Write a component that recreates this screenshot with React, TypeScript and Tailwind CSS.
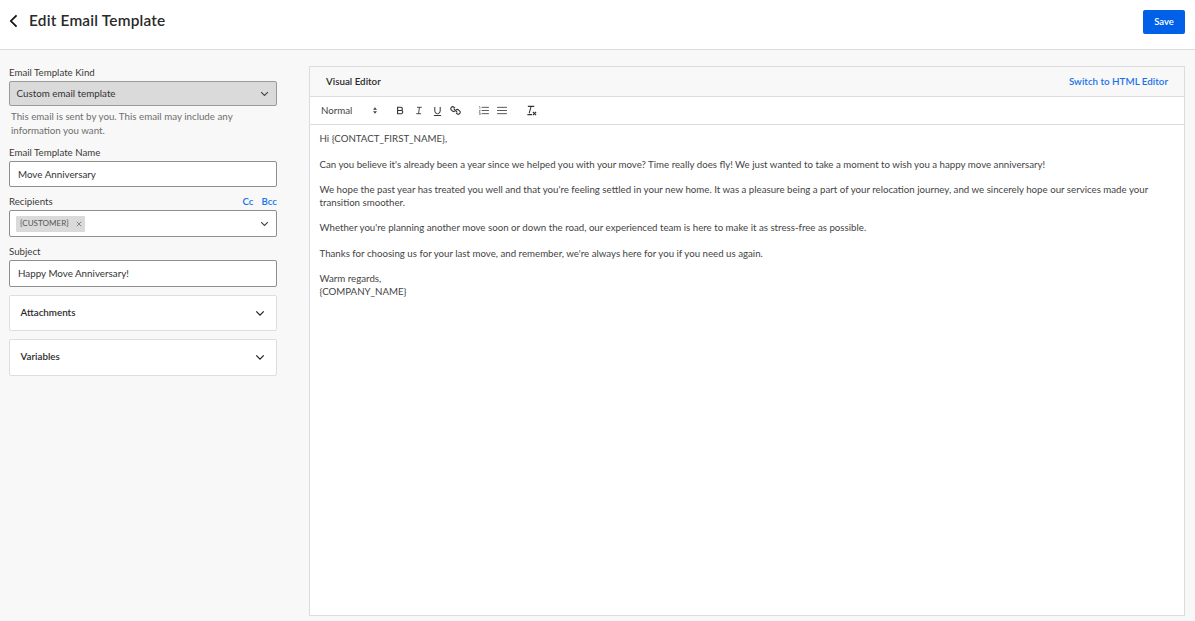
import React from 'react';

const Chevron = ({ className }: { className: string }) => (
  <svg viewBox="0 0 12 8" fill="none" stroke="currentColor" className={className}>
    <path d="M1.5 1.5 6 6l4.500-4.500" strokeWidth="1.500" />
  </svg>
);

const Field = ({ label, children }: { label: React.ReactNode; children: React.ReactNode }) => (
  <div>
    <div className="h-[14px] flex items-center justify-between text-[9.7px] leading-[14px] text-[#3a3a3a]">{label}</div>
    {children}
  </div>
);

const Accordion = ({ title, h }: { title: string; h: string }) => (
  <div className={`flex justify-between pl-[10.500px] pr-[11px] pt-[9px] bg-white border border-[#dedede] rounded-[2px] ${h}`}>
    <span className="text-[9.800px] font-semibold leading-[14px] text-[#2b2b2b]">{title}</span>
    <Chevron className="w-[10px] h-[7px] mt-[5px] text-[#222]" />
  </div>
);

const ToolButton = ({ children }: { children: React.ReactNode }) => (
  <span className="w-[18.500px] h-[14px] flex items-center justify-center">{children}</span>
);

const paragraphs = [
  "Can you believe it's already been a year since we helped you with your move? Time really does fly! We just wanted to take a moment to wish you a happy move anniversary!",
  "We hope the past year has treated you well and that you're feeling settled in your new home. It was a pleasure being a part of your relocation journey, and we sincerely hope our services made your transition smoother.",
  "Whether you're planning another move soon or down the road, our experienced team is here to make it as stress-free as possible.",
  "Thanks for choosing us for your last move, and remember, we're always here for you if you need us again.",
];

export default function App() {
  return (
    <div className="w-[1195px] h-[621px] overflow-hidden bg-[#f8f8f8] font-['Lato',sans-serif]">
      {/* Header */}
      <header className="h-[50px] bg-white border-b border-[#dcdcdc] flex items-start justify-between pl-[9px] pr-[10px]">
        <div className="flex items-center h-[42px]">
          <svg viewBox="0 0 10 16" fill="none" stroke="#111" className="w-[9px] h-[14px]">
            <path d="M8.500 1.500 2 8l6.500 6.500" strokeWidth="2" />
          </svg>
          <h1 className="ml-[11px] text-[15.400px] font-semibold tracking-[0.2px] text-[#2a2a2a]">Edit Email Template</h1>
        </div>
        <button className="mt-[10px] w-[42px] h-[24px] rounded-[2px] bg-[#0061e8] text-white text-[9.500px] font-semibold">Save</button>
      </header>

      <div className="flex pl-[9px] pt-[15px]">
        {/* Left column */}
        <aside className="w-[268px] shrink-0 flex flex-col">
          <Field label="Email Template Kind">
            <div className="h-[25px] mt-[2px] flex items-center justify-between pl-[6.500px] pr-[7px] bg-[#dadada] border border-[#9a9a9a] rounded-[2px] text-[9.800px] text-[#333]">
              Custom email template
              <Chevron className="w-[9px] h-[6px] text-[#444]" />
            </div>
          </Field>
          <p className="mt-[4px] pl-[2px] text-[9.750px] leading-[13.500px] text-[#6e6e6e]">
            This email is sent by you. This email may include any information you want.
          </p>
          <div className="mt-[8px]">
            <Field label="Email Template Name">
              <div className="h-[26px] mt-[2px] flex items-center px-2 bg-white border border-[#8f8f8f] rounded-[2px] text-[9.800px] text-[#333]">
                Move Anniversary
              </div>
            </Field>
          </div>
          <div className="mt-[7px]">
            <Field
              label={
                <>
                  <span>Recipients</span>
                  <span className="flex gap-2 font-semibold text-[#1a73e8]">
                    <span>Cc</span>
                    <span>Bcc</span>
                  </span>
                </>
              }
            >
              <div className="h-[27px] mt-[2px] flex items-center justify-between pl-[6px] pr-[7px] bg-white border border-[#8f8f8f] rounded-[2px]">
                <span className="h-[16px] w-[69px] flex items-center justify-between pl-1 pr-[3px] bg-[#dadada] rounded-[1px] text-[8.100px] text-[#555]">
                  {'{CUSTOMER}'}
                  <svg viewBox="0 0 8 8" stroke="#666" className="w-[6px] h-[6px]">
                    <path d="m1 1 6 6M7 1 1 7" strokeWidth="1" />
                  </svg>
                </span>
                <Chevron className="w-[9px] h-[6px] text-[#444]" />
              </div>
            </Field>
          </div>
          <div className="mt-[7px]">
            <Field label="Subject">
              <div className="h-[27px] mt-[2px] flex items-center px-2 bg-white border border-[#8f8f8f] rounded-[2px] text-[9.800px] text-[#333]">
                Happy Move Anniversary!
              </div>
            </Field>
          </div>
          <div className="mt-[8px] flex flex-col gap-[8px]">
            <Accordion title="Attachments" h="h-[36px]" />
            <Accordion title="Variables" h="h-[37px]" />
          </div>
        </aside>

        {/* Editor */}
        <section className="ml-[32px] w-[876px] h-[550px] mt-[1px] flex flex-col bg-white border border-[#dcdcdc]">
          <div className="h-[30px] flex items-center justify-between pl-[16px] pr-[16px] pb-[1px] bg-[#f8f8f8] border-b border-[#dcdcdc]">
            <span className="text-[9.800px] font-semibold text-[#2b2b2b]">Visual Editor</span>
            <span className="text-[9.800px] font-semibold text-[#1a73e8]">Switch to HTML Editor</span>
          </div>
          <div className="h-[28px] flex items-center pl-[11px] border-b border-[#dcdcdc] text-[#444]">
            <span className="w-[70px] text-[9.700px] text-[#444] flex items-center">
              Normal
              <svg viewBox="0 0 6 10" fill="#444" className="ml-[21px] w-[4px] h-[7px]">
                <path d="M3 0 6 4H0zM3 10 0 6h6z" />
              </svg>
            </span>
            <div className="flex items-center">
              <ToolButton>
                <svg viewBox="0 0 10 10" fill="none" stroke="#333" className="w-[8px] h-[9px]">
                  <path d="M2 1h4a2 2 0 0 1 0 4H2zM2 5h4.500a2 2 0 0 1 0 4H2z" strokeWidth="1.400" />
                </svg>
              </ToolButton>
              <ToolButton>
                <svg viewBox="0 0 10 10" fill="none" stroke="#333" className="w-[8px] h-[9px]">
                  <path d="M2.500 1h6M1.500 9h6M5.500 1l-1 8" strokeWidth="1.100" />
                </svg>
              </ToolButton>
              <ToolButton>
                <svg viewBox="0 0 10 11" fill="none" stroke="#333" className="w-[9px] h-[10px]">
                  <path d="M2 1v4.500a3 3 0 0 0 6 0V1M1 10.500h8" strokeWidth="1.100" />
                </svg>
              </ToolButton>
              <ToolButton>
                <svg viewBox="0 0 12 12" fill="none" stroke="#333" className="w-[11px] h-[11px]">
                  <path d="M5.500 3.500 4.500 2.500a2 2 0 0 0-3 0 2 2 0 0 0 0 3l1 1a2 2 0 0 0 3 0" strokeWidth="1.200" />
                  <path d="M6.500 8.500l1 1a2 2 0 0 0 3 0 2 2 0 0 0 0-3l-1-1a2 2 0 0 0-3 0" strokeWidth="1.200" />
                  <path d="M4 4l4 4" strokeWidth="1.200" />
                </svg>
              </ToolButton>
            </div>
            <div className="ml-[9px] flex items-center">
              <ToolButton>
                <svg viewBox="0 0 12 10" fill="none" stroke="#333" className="w-[11px] h-[9px]">
                  <path d="M4 1.500h8M4 5h8M4 8.500h8" strokeWidth="0.900" />
                  <path d="M1 .5h1v3M1 5h1.500L1 7h1.500M1 8h1.500v1.500H1" strokeWidth="0.500" />
                </svg>
              </ToolButton>
              <ToolButton>
                <svg viewBox="0 0 11 10" fill="none" stroke="#333" className="w-[10px] h-[9px]">
                  <path d="M0 1.500h11M0 5h11M0 8.500h11" strokeWidth="0.900" />
                </svg>
              </ToolButton>
            </div>
            <div className="ml-[11px]">
              <ToolButton>
                <svg viewBox="0 0 12 12" fill="none" stroke="#333" className="w-[11px] h-[11px]">
                  <path d="M2 1.500h7M5.500 1.500 3.500 9M1.500 10.500h5" strokeWidth="1.100" />
                  <path d="m7.500 7.500 3.500 3.500M11 7.500 7.500 11" strokeWidth="1.400" />
                </svg>
              </ToolButton>
            </div>
          </div>
          <div className="pt-[7px] pl-[9.500px] pr-[10px] text-[9.700px] leading-[12.750px] text-[#444]">
            <p>{'Hi {CONTACT_FIRST_NAME},'}</p>
            {paragraphs.map((text) => (
              <p key={text} className="mt-[12.750px]">
                {text}
              </p>
            ))}
            <p className="mt-[12.750px]">Warm regards,</p>
            <p>{'{COMPANY_NAME}'}</p>
          </div>
        </section>
      </div>
    </div>
  );
}
